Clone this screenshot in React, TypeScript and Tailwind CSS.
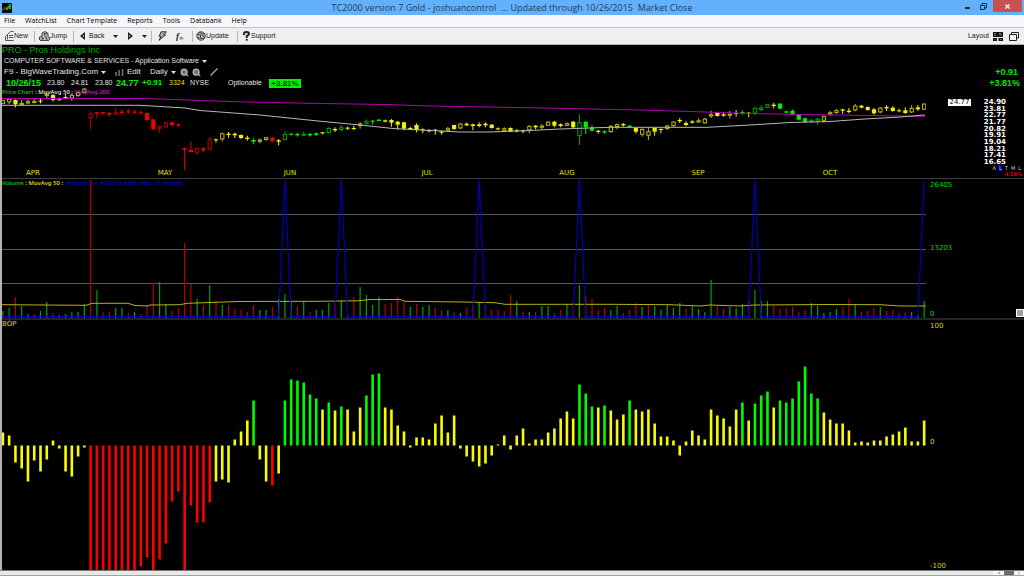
import type { ReactNode } from "react";
import { ChevronLeft, Search } from "lucide-react";

const PITCH = 6.267;
const barX = (i: number) => 0.9 + i * PITCH;

type Tone = "g" | "y" | "r";
const TONE: Record<Tone, string> = { g: "#00f000", y: "#f4f000", r: "#f00000" };
const DIM: Record<Tone, string> = { g: "#00a400", y: "#c0bc00", r: "#b40000" };

/* high, body top, body bottom, low; an upper-case tone is a filled body */
const CANDLES = `y30,31,42,42 y24,26,37,42 Y28,30,43,52 y30,39,43,43 y28,34,40,42 y25,33,38,40 Y27,32,35,40 y8,12,18,27 Y12,15,30,35 y22,25,29,31
Y12,21,26,28 y10,15,25,33 y5,7,18,20 y-6,-4,8,10 r63,71,84,118 R65,67,71,84 R65,66,70,75 R65,69,74,80 r52,67,74,75 R57,65,69,74
R57,64,67,72 R60,65,68,72 R62,67,70,74 R67,69,90,95 R86,88,118,120 r106,109,116,128 r96,97,112,113 R96,97,105,109 R100,103,106,111 R172,175,180,240
R154,180,186,187 r172,175,188,195 R171,175,181,186 r142,146,179,181 Y146,148,151,158 y128,130,148,155 Y126,131,135,143 Y128,131,136,144 Y133,135,144,147 Y137,143,147,152
G145,150,155,163 y145,149,155,160 y141,142,150,152 R141,143,154,156 Y147,151,155,166 g124,132,150,151 G129,131,134,137 G128,132,136,140 g125,131,137,138 G129,132,136,140
G127,130,135,138 Y126,127,130,133 g112,114,129,130 Y112,117,121,126 g105,112,120,125 Y110,113,116,120 Y107,114,117,121 y96,101,108,116 g88,94,101,104 G90,92,95,104
G87,89,93,94 Y89,91,95,97 Y87,90,98,110 Y93,95,104,119 Y95,97,116,121 Y110,114,118,120 Y100,105,120,127 Y115,118,121,130 Y117,120,124,127 Y117,119,122,134
Y122,124,128,134 y111,115,122,124 Y104,105,117,120 y99,101,115,117 Y98,101,106,108 Y101,103,108,121 Y97,103,108,112 Y97,101,106,112 Y102,104,114,116 Y112,115,118,121
y112,115,122,124 Y112,114,125,126 Y117,121,124,127 Y119,121,123,130 y105,108,121,130 Y105,107,112,118 y103,107,113,118 y94,95,107,108 Y93,95,107,112 Y100,103,108,112
y97,100,107,109 Y93,95,112,114 g73,97,138,165 G94,95,112,132 G105,113,122,125 Y120,122,126,131 G121,124,128,131 y105,108,126,128 y100,103,111,118 Y99,102,106,110
G105,107,111,115 Y112,114,125,131 y115,117,134,140 y112,124,137,150 Y112,114,125,137 Y115,117,120,130 y105,107,117,119 y94,95,108,110 Y84,90,94,99 Y94,99,105,108
Y91,94,98,101 y85,91,97,98 y84,86,100,101 y62,73,78,84 Y66,69,78,80 Y66,73,77,80 y63,71,77,86 Y60,69,71,80 G61,66,70,74 Y66,68,70,82
g50,54,70,77 g46,53,60,64 g42,43,53,55 Y38,44,48,55 G39,41,56,58 G62,64,68,71 G59,62,74,76 G73,75,89,91 G82,85,96,98 g87,90,96,99
g84,86,94,104 y76,79,92,98 y63,67,73,77 y57,61,69,71 Y56,58,62,72 Y54,62,66,70 y42,47,61,64 Y45,47,53,55 Y49,51,60,62 Y54,58,70,74
y51,53,67,70 Y45,51,55,63 Y49,53,63,65 Y56,61,64,67 Y52,61,69,72 y46,54,67,69 Y45,52,58,62 y40,41,59,59`
  .split(/\s+/)
  .map((s) => {
    const [high, top, bottom, low] = s.slice(1).split(",").map((v) => 2 + Number(v) / 3);
    return { tone: s[0].toLowerCase() as Tone, filled: s[0] !== s[0].toLowerCase(), high, top, bottom, low };
  });

const bars = (data: string) =>
  data.split(/\s+/).map((s) => ({ tone: s[0] as Tone, value: Number(s.slice(1)) }));

const VOLUME = bars(`g7 g10 r21 g12 g4 r4 g7 g16 r5 g3 g4 g6 g6 g14 r138 g28 r6 r6 g10 g10
r5 g6 r4 r13 r35 g36 g14 r7 r10 r75 r34 g19 r13 g33 r18 g13 r13 r9 r8 r6
r13 g8 g8 r11 g19 g24 g16 r12 g17 r6 g8 g8 g15 r15 g18 r3 r21 g31 g23 g13
g21 r14 r15 r21 r16 g11 r14 g11 g13 r10 r8 g8 r6 g5 r10 r13 g16 r12 r8 r8
r7 r23 g17 r6 g6 r6 g12 g12 r5 r8 g14 r17 g33 r22 r19 r8 r10 g8 g12 r5
r8 r15 g11 r14 g12 g8 g13 g10 g15 r9 g12 g9 g6 g38 r12 r9 g11 g10 g14 r17
g28 g17 g17 r13 r9 r10 r11 r6 r8 g15 g12 g5 g6 g9 r11 r19 g14 r6 r7 r10
g11 r7 r8 r5 r6 g6 g3 g17`);

const BOP = bars(`y13 y10 y-17 y-23 y-36 y-15 y-26 y-14 y5 y-3 y-26 y-31 y-11 y-2 r-125 r-125 r-125 r-125 r-125 r-125
r-125 r-125 r-121 r-112 r-125 r-114 r-98 r-56 r-46 r-125 r-60 r-77 r-77 r-57 y-36 y-34 y-37 y6 y14 y25
g45 y-14 y-36 r-40 y-28 g45 g66 g65 g63 g51 g47 y36 g43 y35 g39 y36 y14 y38 g50 g71
g72 y38 y36 y20 y14 y-2 y8 y8 y6 y22 y30 y13 y30 y-3 y-11 y-16 y-21 y-18 y-10 y1
y10 y-4 y10 y17 y2 y6 y6 y13 y17 y27 y34 y27 g61 g52 g39 y38 g40 y35 y26 y31
g45 y36 y34 y36 y22 y9 y9 y5 y-10 y4 y15 y10 y6 y36 y30 y27 y19 y36 g43 y25
g42 g50 g54 y38 g45 g43 g47 g64 g79 g52 g47 y33 y26 y22 y22 y15 y3 y4 y3 y5
y5 y9 y11 y14 y18 y4 y4 y25`);

const SIGNALS = [45, 54, 76, 92, 120, 147];
const signalLine =
  "M0 137.5" +
  SIGNALS.map((i) => ` L${barX(i - 1)} 137.5 L${barX(i)} 1` + (i < 147 ? ` L${barX(i + 1)} 137.5` : "")).join("");

const MONTHS: [string, number][] = [
  ["APR", 31], ["MAY", 163], ["JUN", 288], ["JUL", 425], ["AUG", 565], ["SEP", 696], ["OCT", 828],
];
const PRICES = ["24.90", "23.81", "22.77", "21.77", "20.82", "19.91", "19.04", "18.21", "17.41", "16.65"];

const SMALL = "font-['DejaVu_Sans',sans-serif]";
const LEGEND = "absolute top-0 left-0 font-['Noto_Sans',sans-serif] text-[6px] leading-[9px] font-medium whitespace-pre text-[#eee]";

function Caret() {
  return (
    <svg viewBox="0 0 5 3" className="h-[3px] w-[5px] shrink-0 fill-current" aria-hidden="true">
      <path d="M0 0h5L2.5 3z" />
    </svg>
  );
}

function TitleBar() {
  return (
    <header className="flex h-[15px] shrink-0 items-center bg-[#63b1fd]">
      <div className="w-[63px] shrink-0 pl-0.5">
        <svg viewBox="0 0 10 10" className="size-[10px]" aria-hidden="true">
          <path d="M0 0h10v10H0z" fill="#080c08" />
          <path d="M.5 7l3-3" stroke="#e02020" strokeWidth="1.5" strokeDasharray="1.5 .5" />
          <path d="M4 5l1.5 1.5" stroke="#e8b820" strokeWidth="1.5" />
          <path d="M5 6l2-3M8 1v5" stroke="#20a820" strokeWidth="2" />
        </svg>
      </div>
      <h1 className="flex-1 text-center font-['Open_Sans','Noto_Sans',sans-serif] text-[9px] leading-[14px] whitespace-pre text-[#213c58]">
        TC2000 version 7 Gold - joshuancontrol {" ... "}Updated through 10/26/2015 {" "}Market Close
      </h1>
      <div className="flex h-full items-start text-[#1b2d44]">
        <button aria-label="Minimize" className="flex h-3 w-3 items-end justify-center pb-[3px]">
          <span className="h-0.5 w-[5px] bg-current" />
        </button>
        <button aria-label="Restore" className="flex h-3 w-5 items-center justify-center">
          <svg viewBox="0 0 7 7" className="size-[7px]" fill="none" stroke="currentColor">
            <path d="M.5 2.5h4v4h-4zM2 2V.5h4.5v4.500H5" />
          </svg>
        </button>
        <button aria-label="Close" className="mr-0.5 flex h-3 w-[29px] items-center justify-center bg-[#c75050] text-white">
          <svg viewBox="0 0 5 5" className="size-[5px]" stroke="currentColor" strokeWidth="1.2">
            <path d="M.5.5l4 4M4.500.5l-4 4" />
          </svg>
        </button>
      </div>
    </header>
  );
}

function MenuBar() {
  return (
    <nav className="flex h-3 shrink-0 items-center gap-2.5 bg-[#f5f6f9] pl-1 font-['Open_Sans','Noto_Sans',sans-serif] text-[7px] leading-3 text-black">
      {["File", "WatchList", "Chart Template", "Reports", "Tools", "Databank", "Help"].map((m) => (
        <button key={m} className="whitespace-nowrap">{m}</button>
      ))}
    </nav>
  );
}

function Tool({ label, children, className }: { label: string; children?: ReactNode; className?: string }) {
  return (
    <button aria-label={label} className={"flex shrink-0 items-center " + (className ?? "")}>
      {children}
    </button>
  );
}
const Divider = () => <span className="h-[11px] w-px shrink-0 bg-[#b4b4b4]" />;

function ToolBar() {
  return (
    <div className="flex h-[18px] shrink-0 items-center border-t border-b border-t-[#c6c6c6] border-b-[#b0b0b0] bg-[#efefef] pl-[5px] font-['Liberation_Sans',Arial,sans-serif] text-[7px] leading-[10px] text-[#202020]">
      <Tool label="New" className="w-[29px]">
        <svg viewBox="0 0 9 10" className="h-[10px] w-[9px]" fill="none" stroke="#444">
          <path d="M2.5 8.500v-5l3-3h3M.5 9.500v-4l2-2M.5 9.500h8M4 4.500h4M4 6.500h4" strokeWidth=".9" />
        </svg>
        New
      </Tool>
      <Divider />
      <Tool label="Jump" className="w-[38px] pl-1">
        <svg viewBox="0 0 11 10" className="h-[10px] w-[11px]" fill="#b8b8b8" stroke="#333" strokeWidth=".9">
          <path d="M.5 9V6L3 5V2l3-1.500 3 2v3l1.500 1V9M3 9V6l2 2M5 3l2 3 1 3M1 9.500h9M5 2.500h3" />
        </svg>
        Jump
      </Tool>
      <Divider />
      <Tool label="Back" className="w-[39px] pl-1.5">
        <svg viewBox="0 0 5 8" className="mr-1 h-2 w-[5px]"><path d="M5 0v8L0 4z" fill="#222" /><path d="M4 3v2L2.500 4z" fill="#ddd" /></svg>
        Back
      </Tool>
      <Tool label="Back history" className="w-[15px]"><Caret /></Tool>
      <Tool label="Forward" className="w-[14px]">
        <svg viewBox="0 0 5 8" className="h-2 w-[5px]"><path d="M0 0v8l5-4z" fill="#222" /><path d="M1 3v2l1.500-1z" fill="#ddd" /></svg>
      </Tool>
      <Tool label="Forward history" className="w-[9px]"><Caret /></Tool>
      <Divider />
      <Tool label="Scan" className="w-6 pl-1.5">
        <svg viewBox="0 0 9 10" className="h-[10px] w-[9px]" fill="#aaa" stroke="#222" strokeWidth=".9">
          <path d="M3 .8h5.300L5.800 4h1.700L1 9.300 3 5.500H1.200z" />
        </svg>
      </Tool>
      <Tool label="Formula" className="w-4 font-['Liberation_Serif',serif] text-[9px] font-bold italic">
        f<span className="pt-1 text-[6px]">∞</span>
      </Tool>
      <Divider />
      <Tool label="Update" className="w-[44px] pl-[3px]">
        <svg viewBox="0 0 10 10" className="size-[10px]" fill="none" stroke="#333" strokeWidth=".9">
          <circle cx="5" cy="5" r="4.200" fill="#bbb" />
          <path d="M1 3l4 1-1 3 4 1M3 1l3 2 3 0M6 4l3 3M2 6l1 2" />
        </svg>
        Update
      </Tool>
      <Divider />
      <Tool label="Support" className="pl-[5px]">
        <svg viewBox="0 0 7 10" className="mr-px h-[10px] w-[7px]" fill="none" stroke="#222">
          <path d="M1 4V2.500Q1 1 3.500 1T6 2.500 3.800 5v2" strokeWidth="2" />
          <path d="M2.800 8.800h2" strokeWidth="1.600" />
          <path d="M2.500 2.500h2" stroke="#ccc" />
        </svg>
        Support
      </Tool>
      <div className="ml-auto flex items-center pr-[5px]">
        <button>Layout</button>
        <Tool label="Layout grid" className="ml-1">
          <svg viewBox="0 0 10 9" className="h-[9px] w-[10px]">
            <path d="M0 0h10v5H0zM0 6h4v3H0zM5.500 6H10v3H5.500z" fill="#111" />
            <path d="M1 1.500h2M6 3h3M1 3.500l2-.5M6 1.500h2M1.500 7.500h1M7 7.500h1.500" stroke="#bbb" strokeWidth=".6" />
          </svg>
        </Tool>
        <Tool label="Windows" className="ml-1.5">
          <svg viewBox="0 0 10 9" className="h-[9px] w-[10px]" fill="#f4f4f4" stroke="#222">
            <path d="M2.500.5h7v5.500h-7z" /><path d="M.5 2.500h7v6h-7z" />
          </svg>
        </Tool>
      </div>
    </div>
  );
}

function Quote() {
  return (
    <section className="shrink-0 font-['Liberation_Sans',Arial,sans-serif] text-[7px] leading-[10px] whitespace-nowrap text-[#e4e4e4]">
      <h2 className="h-[11px] text-[9px] leading-[11px] text-[#00a800]">PRO - Pros Holdings Inc</h2>
      <button className="flex h-[10px] items-center gap-[3px] pl-0.5">
        COMPUTER SOFTWARE &amp; SERVICES - Application Software <Caret />
      </button>
      <div className="flex h-3 items-center pl-0.5 text-[8px]">
        <button className="flex w-[111px] items-center gap-[3px]">F9 - BigWaveTrading.Com <Caret /></button>
        <button className="flex w-[35px] items-center gap-[3px]">
          <svg viewBox="0 0 9 7" className="h-[7px] w-[9px]" stroke="#777" strokeWidth="1.5"><path d="M1 3v4M4 1v6M7.500 0v7" /></svg>
          Edit
        </button>
        <button className="flex w-[30px] items-center gap-[3px]">Daily <Caret /></button>
        <button aria-label="Zoom out" className="w-3"><Search className="size-[9px] fill-[#777] stroke-[#bbb] stroke-3" /></button>
        <button aria-label="Zoom in" className="w-[18px]"><Search className="size-[9px] fill-[#777] stroke-[#bbb] stroke-3" /></button>
        <button aria-label="Draw line">
          <svg viewBox="0 0 8 8" className="size-2" stroke="#aaa" strokeWidth="1.3"><path d="M.5 7.500l7-7" /></svg>
        </button>
        <span className="ml-auto pr-1.5 text-[9px] font-bold text-[#00e400]">+0.91</span>
      </div>
      <div className="flex h-[10px] items-center pl-0.5">
        <div className="grid grid-cols-[41px_24px_24px_21px_26px_27px_21px_38px_41px_32px] items-center pl-0.5">
          <b className="text-[9px] text-[#00f000]">10/26/15</b>
          <span>23.80</span>
          <span>24.81</span>
          <span>23.80</span>
          <b className="text-[9px] text-[#00f000]">24.77</b>
          <b className="text-[8px] text-[#00f000]">+0.91</b>
          <span className="text-[#e0dc20]">3324</span>
          <span>NYSE</span>
          <span>Optionable</span>
          <b className="bg-[#00f000] text-center text-[8px] leading-[9px] text-[#003800]">+3.81%</b>
        </div>
        <span className="ml-auto pr-1 text-[9px] font-bold text-[#00e400]">+3.81%</span>
      </div>
    </section>
  );
}

function PricePane() {
  return (
    <section className="flex h-[91px] shrink-0 border-b border-[#3c3c3c]">
      <div className="relative min-w-0 flex-1">
        <svg viewBox="0 0 924 90" preserveAspectRatio="none" className="h-[90px] w-full" role="img" aria-label="Price chart">
          {CANDLES.map((c, i) => (
            <g key={i} stroke={c.filled ? TONE[c.tone] : DIM[c.tone]} fill={c.filled ? TONE[c.tone] : "#000"}>
              <path d={`M${barX(i)} ${c.high}V${c.low}`} />
              {c.filled ? (
                <rect x={barX(i) - 2.1} y={c.top} width="4.2" height={Math.max(1, c.bottom - c.top)} stroke="none" />
              ) : (
                <rect x={barX(i) - 1.6} y={c.top + 0.4} width="3.3" height={Math.max(1.2, c.bottom - c.top - 0.8)} />
              )}
            </g>
          ))}
          <path d="M0 10.500H141L171 11.500 205 12.700 245 14 308 15.300 383 16.500 428 18 558 20.300 638 22 688 23.500 748 25.500 798 26.500 923 28.300" fill="none" stroke="#b000b0" />
          <path d="M0 17.300H138L183 20 198 22.500 258 27 316 33 358 37 391 40.500 458 44H488L528 42.500 558 41 608 39.300H705L748 37 788 34.500 828 33.500 863 31 898 29 923 27" fill="none" stroke="#b8b8b8" />
        </svg>
        <p className={LEGEND}>
          <span className="text-[#00d000]">Price Chart</span> : MovAvg 50 : <span className="text-[#e000e0]">MovAvg 200</span>
        </p>
        {MONTHS.map(([m, x]) => (
          <span
            key={m}
            className={"absolute bottom-px -translate-x-1/2 text-[7px] leading-[8px] text-[#e4e000] " + SMALL}
            style={{ left: `${(x / 924) * 100}%` }}
          >
            {m}
          </span>
        ))}
      </div>
      <div className="relative w-[98px] shrink-0 pt-[11px]">
        <ul className={"flex h-[66px] flex-col justify-between pr-[18px] text-right text-[7px] leading-[6px] font-bold text-white " + SMALL}>
          {PRICES.map((p) => <li key={p}>{p}</li>)}
        </ul>
        <span className={"absolute top-[11px] left-[22px] w-[23px] bg-white text-center text-[7px] leading-[7px] text-black " + SMALL}>24.77</span>
        <div className={"flex justify-end gap-[3px] pr-[3px] text-[5px] leading-[6px] text-[#ccc] " + SMALL}>
          <span>A</span><span className="bg-[#0000e0]">L</span><span>T</span><span>M</span><span>L</span>
        </div>
        <p className={"pr-0.5 text-right text-[5px] leading-[7px] font-bold text-[#d80000] " + SMALL}>4.58%</p>
      </div>
    </section>
  );
}

function VolumePane() {
  return (
    <section className="flex h-[141px] shrink-0 border-b-2 border-[#242424]">
      <div className="relative min-w-0 flex-1">
        <svg viewBox="0 0 924 139" preserveAspectRatio="none" className="h-[139px] w-full" role="img" aria-label="Volume chart">
          <path d="M0 35.500H924M0 70.500H924M0 104.500H924" stroke="#585858" />
          {VOLUME.map((v, i) => (
            <path key={i} d={`M${barX(i)} 139v${-v.value}`} stroke={DIM[v.tone]} strokeWidth="1.2" />
          ))}
          <path d="M0 125.700 84 126.300 90 124.300H126L133 126.500 145 127 148 126 178 125.700 185 124.300 238 122.500 318 122.300 356 121.800 368 120.500H398L403 122.300 461 123 493 123.700 503 125.300H608L668 125.700 698 127 708 126 738 127 753 126 828 125.500 878 125.700 898 127H924" fill="none" stroke="#b8b400" />
          <path d={signalLine} fill="none" stroke="#0000c4" strokeWidth="1.1" />
        </svg>
        <p className={LEGEND}>
          <span className="text-[#00d000]">Volume</span> : <span className="text-[#e8e400]">MovAvg 50</span> :{"  "}
          <span className="text-[#0000f0]">%True(C &gt;= AVGC10 AND (ABS...)1 Period</span>
        </p>
      </div>
      <div className={"relative flex w-[98px] shrink-0 flex-col justify-between pt-0.5 pl-1 text-[7px] leading-[8px] text-[#00d800] " + SMALL}>
        <span>26405</span>
        <span className="pb-1">13203</span>
        <span>0</span>
        <button aria-label="Resize pane" className="absolute right-0 bottom-px size-2 border border-white bg-[#a0a0a0]" />
      </div>
    </section>
  );
}

function BopPane() {
  return (
    <section className="flex min-h-[250px] flex-1">
      <div className="relative min-w-0 flex-1">
        <svg viewBox="0 0 924 250" preserveAspectRatio="none" className="absolute inset-0 size-full" role="img" aria-label="Balance of power chart">
          {BOP.map((b, i) => (
            <rect
              key={i}
              x={barX(i) - 1.3}
              y={b.value > 0 ? 125.5 - b.value : 125.5}
              width="2.6"
              height={Math.abs(b.value)}
              fill={{ g: "#00fa00", y: "#fafa00", r: "#fa0000" }[b.tone]}
            />
          ))}
        </svg>
        <p className={"absolute top-0 left-0 text-[7px] leading-[9px] text-[#dcd800] " + SMALL}>BOP</p>
      </div>
      <div className={"flex w-[98px] shrink-0 flex-col justify-between pt-0.5 pl-1 text-[7px] leading-[8px] text-[#dcd800] " + SMALL}>
        <span>100</span>
        <span className="pb-2">0</span>
        <span>-100</span>
      </div>
    </section>
  );
}

export default function App() {
  return (
    <div className="flex min-h-screen flex-col overflow-hidden bg-black">
      <TitleBar />
      <MenuBar />
      <ToolBar />
      <main className="flex flex-1 flex-col border-l-2 border-[#b4b4b4]">
        <Quote />
        <PricePane />
        <VolumePane />
        <BopPane />
      </main>
      <footer className="shrink-0">
        <div className="flex h-[5px] justify-end border-t border-[#777] bg-[#e8e8e8]">
          <button aria-label="Scroll left" className="flex w-[11px] items-center justify-center bg-[#f8f8f8]"><ChevronLeft className="size-1 stroke-[#333] stroke-4" /></button>
          <span className="w-[10px] bg-[#6c6c6c]" />
          <button aria-label="Scroll right" className="flex w-[10px] items-center justify-center bg-[#f8f8f8]"><ChevronLeft className="size-1 rotate-180 stroke-[#777] stroke-4" /></button>
        </div>
        <div className="h-px bg-[#8ea4bd]" />
      </footer>
    </div>
  );
}
